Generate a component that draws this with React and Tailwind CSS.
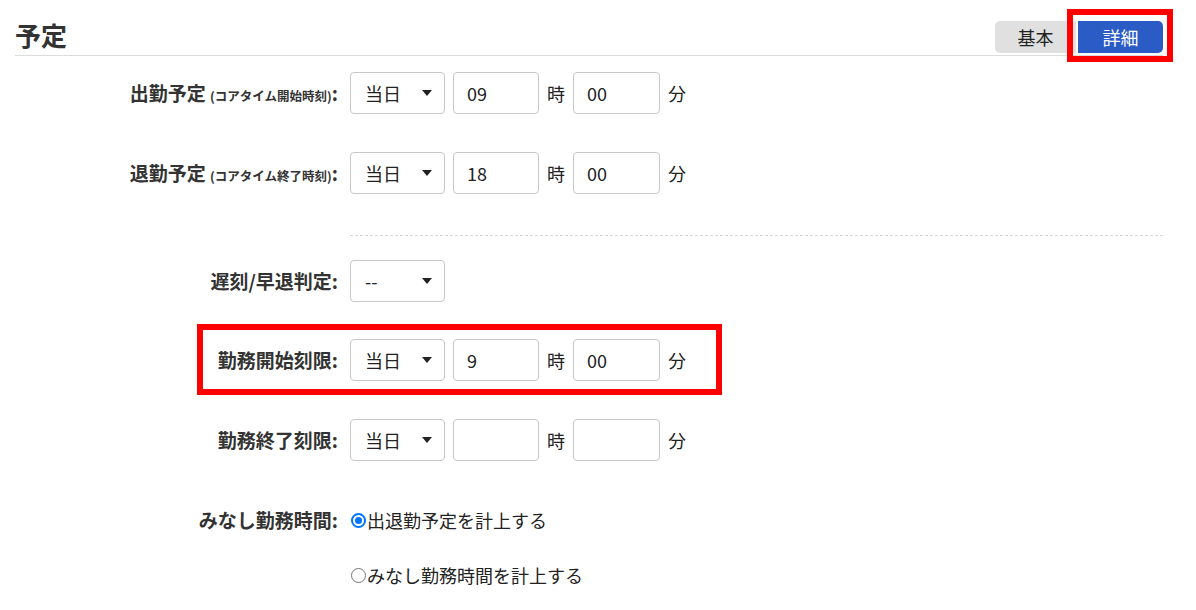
import { useState } from "react";

const FONT = { fontFamily: '"Noto Sans CJK JP", "Noto Sans", sans-serif' };

// select look-alike: fixed width box with a small black caret on the right
const DaySelect = ({ value }) => (
  <div className="flex h-[42px] w-[95px] items-center justify-between rounded-[4px] border border-[#c8c8c8] bg-white pl-[14px] pr-[12px] text-[18px] text-[#222]">
    <span>{value}</span>
    <svg width="10" height="6" viewBox="0 0 10 6" className="shrink-0">
      <path d="M0 0h10L5 6z" fill="#222" />
    </svg>
  </div>
);

const NumBox = ({ value, className = "" }) => (
  <input
    readOnly
    value={value}
    className={`h-[42px] rounded-[4px] border border-[#c8c8c8] bg-white pl-[13px] text-[18px] text-[#222] outline-none ${className}`}
  />
);

const TimeInputs = ({ day = "当日", hour, minute }) => (
  <div className="flex items-center">
    <DaySelect value={day} />
    <NumBox value={hour} className="ml-[8px] w-[86px]" />
    <span className="mx-[8px] text-[18px] text-[#222]">時</span>
    <NumBox value={minute} className="w-[87px]" />
    <span className="ml-[8px] text-[18px] text-[#222]">分</span>
  </div>
);

const Row = ({ label, children, className = "" }) => (
  <div className={`relative flex h-[42px] items-center ${className}`}>
    <div className="w-[323px] text-right text-[19px] font-bold text-[#333]">{label}</div>
    <div className="ml-[12px]">{children}</div>
  </div>
);

const Radio = ({ checked, onClick, children }) => (
  <button type="button" onClick={onClick} className="flex items-center text-[18px] text-[#222]">
    {checked ? (
      <span className="ml-[1px] mr-[1px] flex h-[15px] w-[15px] items-center justify-center rounded-full border-2 border-[#0075ff] bg-white">
        <span className="h-[7px] w-[7px] rounded-full bg-[#0075ff]" />
      </span>
    ) : (
      <span className="ml-[1px] mr-[1px] h-[15px] w-[15px] rounded-full border-[1.5px] border-[#767676] bg-white" />
    )}
    {children}
  </button>
);

export default function App() {
  const [mode, setMode] = useState("detail");
  const [deemed, setDeemed] = useState("plan");

  return (
    <div className="h-[610px] w-[1196px] overflow-hidden bg-white" style={FONT}>
      <div className="ml-[15px] w-[1148px]">
        <div className="flex items-end justify-between border-b border-[#dcdcdc] pb-[2px] pt-[21px]">
          <h2 className="mb-[4px] text-[26px] font-bold leading-[28px] text-[#333]">予定</h2>
          <div className="flex gap-[2px]">
            <button
              onClick={() => setMode("basic")}
              className="h-[32px] w-[81px] rounded-l-[5px] bg-[#e0e0e0] text-[18px] text-[#222]"
            >
              基本
            </button>
            <div className="relative">
              <button
                onClick={() => setMode("detail")}
                className="h-[32px] w-[85px] rounded-r-[5px] bg-[#2b5cc6] text-[18px] text-white"
              >
                詳細
              </button>
              <div className="pointer-events-none absolute -bottom-[9px] -left-[11px] -right-[10px] -top-[12px] border-[6px] border-[#ff0000]" />
            </div>
          </div>
        </div>

        <div className="pt-[16px]">
          <Row
            label={
              <>
                出勤予定 <span className="text-[12.5px]">(コアタイム開始時刻)</span>:
              </>
            }
          >
            <TimeInputs hour="09" minute="00" />
          </Row>
          <Row
            className="mt-[38px]"
            label={
              <>
                退勤予定 <span className="text-[12.5px]">(コアタイム終了時刻)</span>:
              </>
            }
          >
            <TimeInputs hour="18" minute="00" />
          </Row>

          <div className="ml-[335px] mt-[41px] border-t border-dashed border-[#d8d8d8]" />

          <Row className="mt-[24px]" label="遅刻/早退判定:">
            <DaySelect value="--" />
          </Row>

          <Row className="mt-[37px]" label="勤務開始刻限:">
            <TimeInputs hour="9" minute="00" />
            <div className="pointer-events-none absolute -bottom-[14px] -top-[15px] left-[182px] w-[525px] border-[6px] border-[#ff0000]" />
          </Row>

          <Row className="mt-[38px]" label="勤務終了刻限:">
            <TimeInputs hour="" minute="" />
          </Row>

          <Row className="mt-[38px]" label="みなし勤務時間:">
            <Radio checked={deemed === "plan"} onClick={() => setDeemed("plan")}>
              出退勤予定を計上する
            </Radio>
          </Row>
          <Row className="mt-[13px]" label="">
            <Radio checked={deemed === "deemed"} onClick={() => setDeemed("deemed")}>
              みなし勤務時間を計上する
            </Radio>
          </Row>
        </div>
      </div>
    </div>
  );
}
